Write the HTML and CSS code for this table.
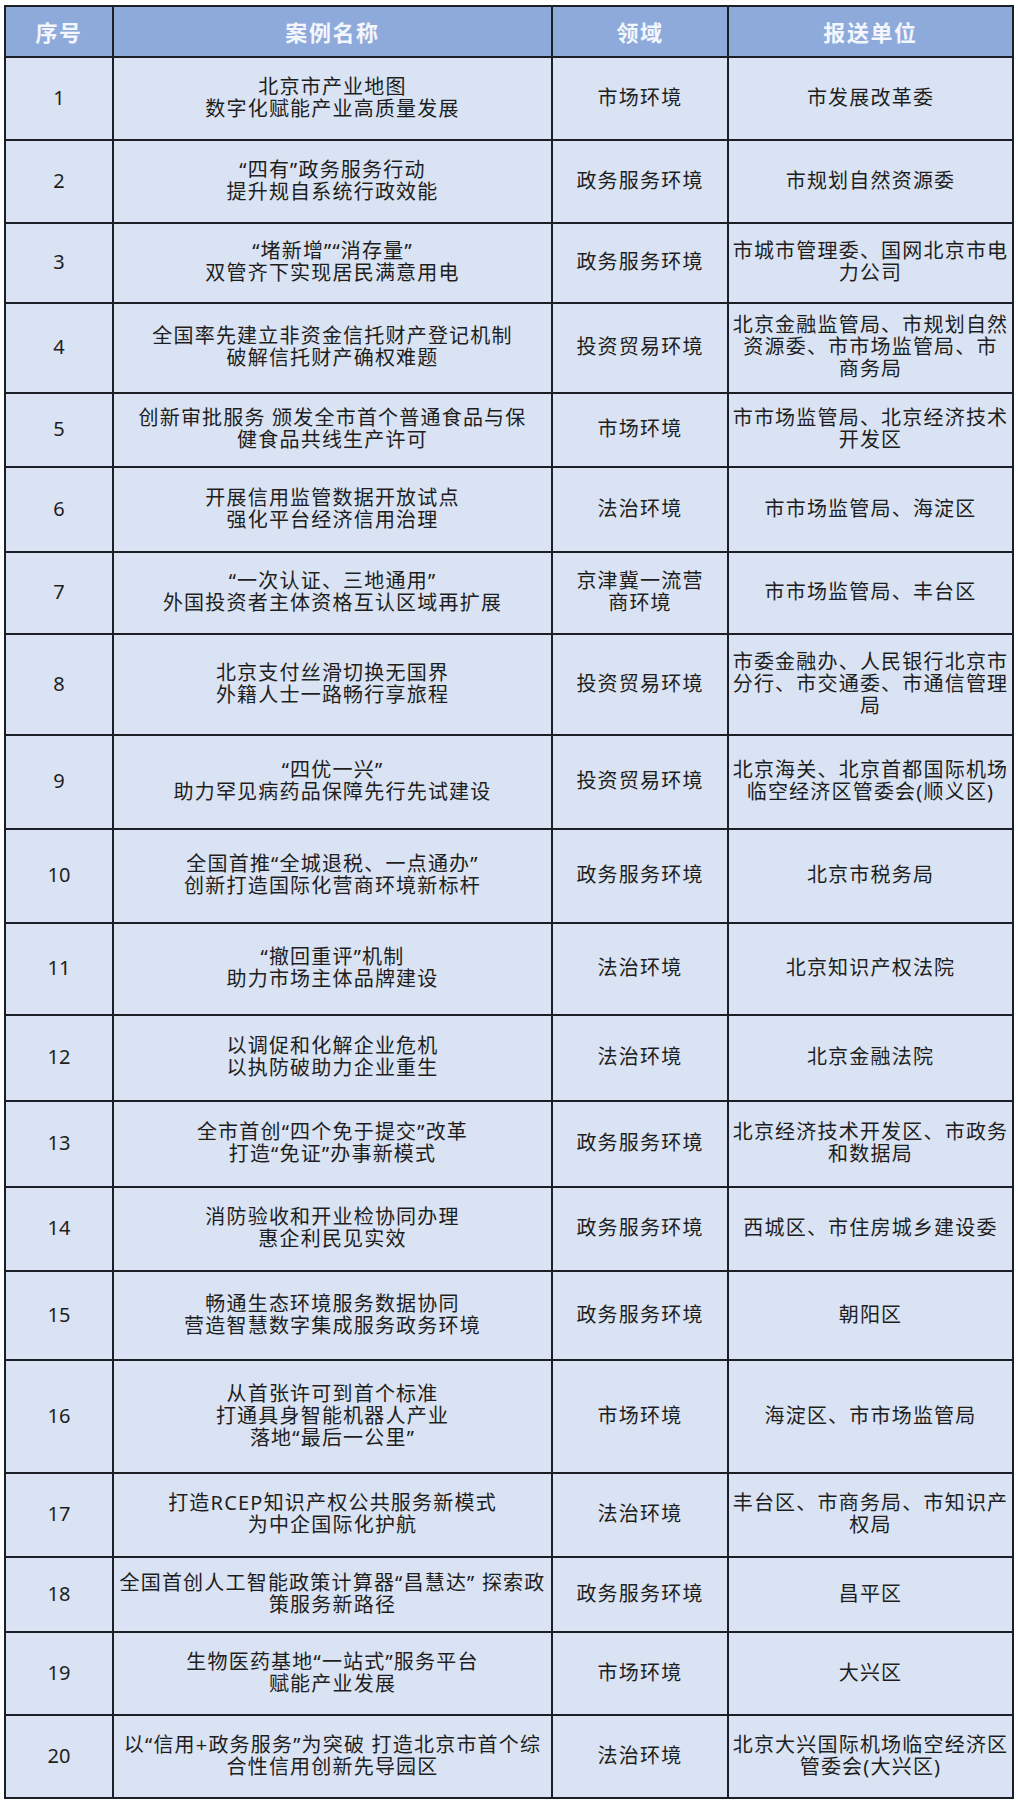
FILE: index.html
```html
<!DOCTYPE html>
<html lang="zh-CN">
<head>
<meta charset="utf-8">
<title>案例列表</title>
<link rel="stylesheet" href="styles.css">
</head>
<body>
<div class="sheet">
  <div class="hd">序号</div><div class="hd">案例名称</div><div class="hd">领域</div><div class="hd">报送单位</div>

  <div class="c num">1</div><div class="c">北京市产业地图<br>数字化赋能产业高质量发展</div><div class="c">市场环境</div><div class="c">市发展改革委</div>
  <div class="c num">2</div><div class="c">“四有”政务服务行动<br>提升规自系统行政效能</div><div class="c">政务服务环境</div><div class="c">市规划自然资源委</div>
  <div class="c num">3</div><div class="c">“堵新增”“消存量”<br>双管齐下实现居民满意用电</div><div class="c">政务服务环境</div><div class="c">市城市管理委、国网北京市电<br>力公司</div>
  <div class="c num">4</div><div class="c">全国率先建立非资金信托财产登记机制<br>破解信托财产确权难题</div><div class="c">投资贸易环境</div><div class="c">北京金融监管局、市规划自然<br>资源委、市市场监管局、市<br>商务局</div>
  <div class="c num">5</div><div class="c">创新审批服务 颁发全市首个普通食品与保<br>健食品共线生产许可</div><div class="c">市场环境</div><div class="c">市市场监管局、北京经济技术<br>开发区</div>
  <div class="c num">6</div><div class="c">开展信用监管数据开放试点<br>强化平台经济信用治理</div><div class="c">法治环境</div><div class="c">市市场监管局、海淀区</div>
  <div class="c num">7</div><div class="c">“一次认证、三地通用”<br>外国投资者主体资格互认区域再扩展</div><div class="c">京津冀一流营<br>商环境</div><div class="c">市市场监管局、丰台区</div>
  <div class="c num">8</div><div class="c">北京支付丝滑切换无国界<br>外籍人士一路畅行享旅程</div><div class="c">投资贸易环境</div><div class="c">市委金融办、人民银行北京市<br>分行、市交通委、市通信管理<br>局</div>
  <div class="c num">9</div><div class="c">“四优一兴”<br>助力罕见病药品保障先行先试建设</div><div class="c">投资贸易环境</div><div class="c">北京海关、北京首都国际机场<br>临空经济区管委会(顺义区)</div>
  <div class="c num">10</div><div class="c">全国首推“全城退税、一点通办”<br>创新打造国际化营商环境新标杆</div><div class="c">政务服务环境</div><div class="c">北京市税务局</div>
  <div class="c num">11</div><div class="c">“撤回重评”机制<br>助力市场主体品牌建设</div><div class="c">法治环境</div><div class="c">北京知识产权法院</div>
  <div class="c num">12</div><div class="c">以调促和化解企业危机<br>以执防破助力企业重生</div><div class="c">法治环境</div><div class="c">北京金融法院</div>
  <div class="c num">13</div><div class="c">全市首创“四个免于提交”改革<br>打造“免证”办事新模式</div><div class="c">政务服务环境</div><div class="c">北京经济技术开发区、市政务<br>和数据局</div>
  <div class="c num">14</div><div class="c">消防验收和开业检协同办理<br>惠企利民见实效</div><div class="c">政务服务环境</div><div class="c">西城区、市住房城乡建设委</div>
  <div class="c num">15</div><div class="c">畅通生态环境服务数据协同<br>营造智慧数字集成服务政务环境</div><div class="c">政务服务环境</div><div class="c">朝阳区</div>
  <div class="c num">16</div><div class="c">从首张许可到首个标准<br>打通具身智能机器人产业<br>落地“最后一公里”</div><div class="c">市场环境</div><div class="c">海淀区、市市场监管局</div>
  <div class="c num">17</div><div class="c">打造RCEP知识产权公共服务新模式<br>为中企国际化护航</div><div class="c">法治环境</div><div class="c">丰台区、市商务局、市知识产<br>权局</div>
  <div class="c num">18</div><div class="c">全国首创人工智能政策计算器“昌慧达” 探索政<br>策服务新路径</div><div class="c">政务服务环境</div><div class="c">昌平区</div>
  <div class="c num">19</div><div class="c">生物医药基地“一站式”服务平台<br>赋能产业发展</div><div class="c">市场环境</div><div class="c">大兴区</div>
  <div class="c num">20</div><div class="c">以“信用+政务服务”为突破 打造北京市首个综<br>合性信用创新先导园区</div><div class="c">法治环境</div><div class="c">北京大兴国际机场临空经济区<br>管委会(大兴区)</div>
</div>
</body>
</html>
```

FILE: styles.css
```css
html, body {
  margin: 0;
  padding: 0;
  background: #ffffff;
}

body {
  font-family: "Noto Sans", "Noto Sans CJK SC", sans-serif;
  color: #1e1e1e;
}

.sheet {
  display: grid;
  grid-template-columns: 106px 437px 174px 283px;
  grid-template-rows: 49px 81px 81px 78px 88px 72px 83px 80px 99px 92px 92px 90px 84px 84px 82px 87px 111px 82px 73px 81px 81px;
  gap: 2px;
  width: max-content;
  margin: 5px 0 0 4px;
  background: #1c1f26;
  border: 2px solid #1c1f26;
}

.hd {
  display: flex;
  align-items: center;
  justify-content: center;
  background: #8eaadb;
  color: #f3f6fc;
  font-weight: 700;
  font-size: 22px;
  letter-spacing: 1.6px;
  padding-bottom: 2px;
}

.c {
  display: flex;
  align-items: center;
  justify-content: center;
  text-align: center;
  background: #dae3f3;
  font-size: 20px;
  letter-spacing: 1.2px;
  line-height: 22px;
  padding-bottom: 2px;
  white-space: nowrap;
}

.num {
  letter-spacing: 0;
  font-size: 20px;
}
```
